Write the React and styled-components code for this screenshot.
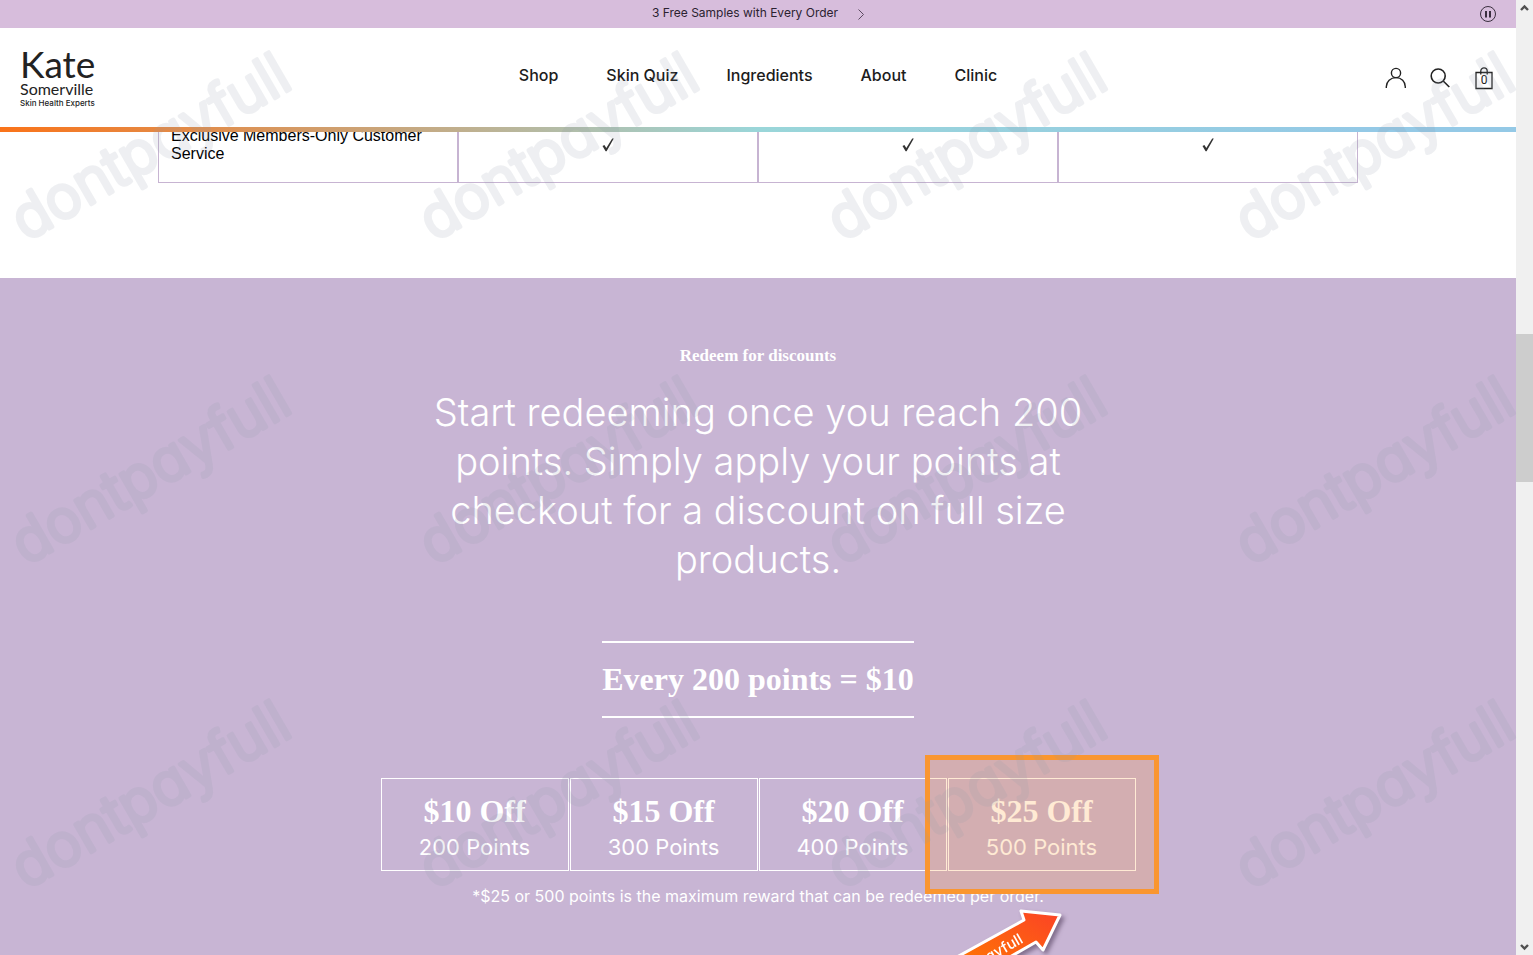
import styled, { createGlobalStyle } from 'styled-components'

const navItems = ['Shop', 'Skin Quiz', 'Ingredients', 'About', 'Clinic']

const rewards = [
  { off: '$10 Off', points: '200 Points' },
  { off: '$15 Off', points: '300 Points' },
  { off: '$20 Off', points: '400 Points' },
  { off: '$25 Off', points: '500 Points', highlighted: true },
]

export default function App() {
  return (
    <>
      <GlobalStyle />
      <Screen>
        <Page>
          <Header />
          <main>
            <BenefitsTable />
            <Redeem />
          </main>
        </Page>
        <ScrollBar />
        <Watermark />
      </Screen>
    </>
  )
}

function Header() {
  return (
    <TopArea>
      <PromoBar>
        <span />
        <PromoLink href="#samples">
          3 Free Samples with Every Order
          <svg width="6" height="11" viewBox="0 0 6 11" fill="none" stroke="#5b4a60" strokeWidth="1">
            <path d="M0.5 0.5 5.5 5.5 0.5 10.5" />
          </svg>
        </PromoLink>
        <IconButton aria-label="Pause announcements">
          <svg width="18" height="18" viewBox="0 0 18 18" fill="none" stroke="#3a2f3f">
            <circle cx="9" cy="9" r="7.5" />
            <path d="M7 6v6.5M11 6v6.5" strokeWidth="2" />
          </svg>
        </IconButton>
      </PromoBar>

      <NavBar>
        <Logo href="#home">
          <LogoName>Kate</LogoName>
          <LogoSurname>Somerville</LogoSurname>
          <LogoTag>Skin Health Experts</LogoTag>
        </Logo>

        <Nav>
          {navItems.map((item) => (
            <NavLink key={item} href="#nav">{item}</NavLink>
          ))}
        </Nav>

        <Tools>
          <IconButton aria-label="Account">
            <svg width="22" height="22" viewBox="0 0 22 22" fill="none" stroke="#222" strokeWidth="1.4">
              <circle cx="12" cy="6" r="4.6" />
              <path d="M2.3 21V19.8C2.3 14.6 6.6 10.6 12 10.6S21.3 14.6 21.3 19.8V21" />
            </svg>
          </IconButton>
          <IconButton aria-label="Search">
            <svg width="22" height="22" viewBox="0 0 22 22" fill="none" stroke="#222" strokeWidth="1.6">
              <circle cx="9.2" cy="9" r="7" />
              <path d="M14.2 14 20.3 20" />
            </svg>
          </IconButton>
          <IconButton aria-label="Bag, 0 items">
            <svg width="20" height="24" viewBox="0 0 20 24" fill="none" stroke="#222" strokeWidth="1.3">
              <path d="M2 6.5H18V22.5H2Z" />
              <path d="M6.8 8.5V5C6.8 0.8 13.2 0.8 13.2 5V8.5" />
            </svg>
            <BagCount>0</BagCount>
          </IconButton>
        </Tools>
      </NavBar>
      <Rainbow />
    </TopArea>
  )
}

function Check() {
  return (
    <svg width="12" height="14" viewBox="0 0 12 14" role="img" aria-label="Included">
      <path d="M0.5 8 2.4 7 4.3 10 10.2 0.6 11.8 0.6 4.6 13.2 3.6 13.2Z" fill="#333" />
    </svg>
  )
}

function BenefitsTable() {
  return (
    <Benefits>
      <tbody>
        <tr>
          <BenefitName scope="row">Exclusive Members-Only Customer Service</BenefitName>
          <BenefitCell><Check /></BenefitCell>
          <BenefitCell><Check /></BenefitCell>
          <BenefitCell><Check /></BenefitCell>
        </tr>
      </tbody>
    </Benefits>
  )
}

function Redeem() {
  return (
    <RedeemSection>
      <Eyebrow>Redeem for discounts</Eyebrow>
      <Lead>
        Start redeeming once you reach 200 points. Simply apply your points at checkout for a
        discount on full size products.
      </Lead>
      <Rate>Every 200 points = $10</Rate>
      <Rewards>
        {rewards.map((reward) => (
          <Reward key={reward.off}>
            <RewardOff>{reward.off}</RewardOff>
            <RewardPoints>{reward.points}</RewardPoints>
            {reward.highlighted && (
              <>
                <Highlight />
                <Pointer />
              </>
            )}
          </Reward>
        ))}
      </Rewards>
      <Note>*$25 or 500 points is the maximum reward that can be redeemed per order.</Note>
    </RedeemSection>
  )
}

function Pointer() {
  return (
    <PointerSvg width="190" height="110" viewBox="0 0 190 110">
      <defs>
        <linearGradient id="pointer-fill" x1="0" y1="1" x2="1" y2="0">
          <stop offset="0.3" stopColor="#ff7a00" />
          <stop offset="1" stopColor="#fb4226" />
        </linearGradient>
      </defs>
      <path
        d="M134 7 173 11 156 46 149 38 50 95 30 75 137 16Z"
        fill="url(#pointer-fill)"
        stroke="#fff"
        strokeWidth="3"
        strokeLinejoin="round"
      />
      <text transform="translate(137 38) rotate(-30)" textAnchor="end">
        dontpayfull
      </text>
    </PointerSvg>
  )
}

function Watermark() {
  return (
    <WatermarkSvg aria-hidden="true">
      <defs>
        <pattern id="mark" width="408" height="324" patternUnits="userSpaceOnUse">
          <text transform="translate(26 242) rotate(-30)">dontpayfull</text>
        </pattern>
      </defs>
      <rect width="100%" height="100%" fill="url(#mark)" />
    </WatermarkSvg>
  )
}

function ScrollBar() {
  return (
    <Track>
      <Arrow viewBox="0 0 17 17"><path d="M5 10 8.5 6.5 12 10" /></Arrow>
      <Gap size={317} />
      <Thumb />
      <Gap size={456} />
      <Arrow viewBox="0 0 17 17"><path d="M5 7 8.5 10.5 12 7" /></Arrow>
    </Track>
  )
}

const GlobalStyle = createGlobalStyle`
  * {
    box-sizing: border-box;
  }

  body {
    margin: 0;
    overflow: hidden;
    background: #fff;
    color: #111;
    font-family: Inter, 'Liberation Sans', sans-serif;
  }

  h2, p, ul {
    margin: 0;
    padding: 0;
  }
`

const Screen = styled.div`
  position: relative;
  display: flex;
  height: 100vh;
  overflow: hidden;
`

const Page = styled.div`
  flex: 1;
  min-width: 0;
  display: flex;
  flex-direction: column;
  overflow: hidden;

  main {
    flex: 1 0 auto;
    display: flex;
    flex-direction: column;
  }
`

const TopArea = styled.header`
  position: relative;
  z-index: 2;
  background: #fff;
`

const PromoBar = styled.div`
  display: grid;
  grid-template-columns: 1fr auto 1fr;
  align-items: center;
  height: 28px;
  padding: 0 19px;
  background: #d7bddc;

  > button {
    justify-self: end;
  }
`

const PromoLink = styled.a`
  display: flex;
  align-items: center;
  gap: 20px;
  padding-bottom: 2px;
  font-size: 12px;
  line-height: 24px;
  color: #2b2230;
  text-decoration: none;

  svg {
    margin-top: 2px;
  }
`

const NavBar = styled.div`
  display: grid;
  grid-template-columns: 1fr auto 1fr;
  align-items: center;
  height: 99px;
  padding: 0 20px;
`

const Logo = styled.a`
  display: flex;
  flex-direction: column;
  justify-self: start;
  font-family: Lato, sans-serif;
  color: #222;
  text-decoration: none;
`

const LogoName = styled.span`
  font-size: 37px;
  line-height: 34px;
`

const LogoSurname = styled.span`
  font-size: 16px;
  line-height: 16px;
`

const LogoTag = styled.span`
  font-family: Inter, sans-serif;
  font-size: 8px;
  font-weight: 500;
  line-height: 12px;
`

const Nav = styled.nav`
  display: flex;
  gap: 48px;
  padding-bottom: 6px;
`

const NavLink = styled.a`
  font-size: 16px;
  font-weight: 500;
  line-height: 20px;
  color: #1c1c1c;
  text-decoration: none;
`

const Tools = styled.div`
  display: flex;
  justify-content: flex-end;
  align-items: center;
  gap: 23px;
  padding-right: 2px;
`

const IconButton = styled.button`
  position: relative;
  display: flex;
  padding: 0;
  border: 0;
  background: none;
  cursor: pointer;
`

const BagCount = styled.span`
  position: absolute;
  inset: 6px 0 0;
  font: 12px/16px Roboto, sans-serif;
  text-align: center;
  color: #222;
`

const Rainbow = styled.div`
  height: 5px;
  background: linear-gradient(90deg, #fa7319, #9ad6d9 50%, #94c9e6 90%);
`

const Benefits = styled.table`
  width: calc(100% - 316px);
  max-width: 1200px;
  margin: -25px auto 95px;
  border-spacing: 0;
  table-layout: fixed;
  font-family: 'Liberation Sans', Arial, sans-serif;
  font-size: 16px;
  line-height: 18px;
  color: #000;
`

const BenefitName = styled.th`
  height: 76px;
  padding: 0 12px;
  border: 1px solid #c7b4d2;
  font-weight: 400;
  text-align: left;
`

const BenefitCell = styled.td`
  border: 1px solid #c7b4d2;

  svg {
    display: block;
    margin: 0 auto;
  }
`

const RedeemSection = styled.section`
  flex: 1;
  display: flex;
  flex-direction: column;
  align-items: center;
  padding: 66px 20px 48px;
  background: #c8b5d4;
  color: #fff;
`

const Eyebrow = styled.h2`
  font-family: 'Liberation Serif', serif;
  font-size: 17px;
  line-height: 24px;
`

const Lead = styled.p`
  max-width: 680px;
  margin-top: 20px;
  font-size: 38px;
  font-weight: 300;
  line-height: 49px;
  text-align: center;
`

const Rate = styled.p`
  margin-top: 57px;
  padding: 18px 0;
  border: solid #fff;
  border-width: 2px 0;
  font-family: 'Liberation Serif', serif;
  font-size: 32px;
  font-weight: 700;
  line-height: 37px;
`

const Rewards = styled.ul`
  display: flex;
  gap: 1px;
  margin-top: 60px;
  list-style: none;
`

const Reward = styled.li`
  position: relative;
  width: 188px;
  padding: 14px 0 6px;
  border: 1px solid #fff;
  text-align: center;
`

const RewardOff = styled.div`
  font-family: 'Liberation Serif', serif;
  font-size: 32px;
  font-weight: 700;
  line-height: 37px;
`

const RewardPoints = styled.div`
  font-size: 22px;
  line-height: 34px;
`

const Highlight = styled.span`
  position: absolute;
  inset: -24px;
  border: 5px solid #fa9630;
  background: rgba(255, 150, 40, 0.2);
`

const PointerSvg = styled.svg`
  position: absolute;
  left: -62px;
  top: 125px;
  filter: drop-shadow(3px 3px 2px rgba(60, 40, 70, 0.5));

  text {
    fill: #fff;
    font-family: Inter, sans-serif;
    font-size: 15px;
    font-weight: 500;
    font-feature-settings: 'cv11';
  }
`

const Note = styled.p`
  margin-top: 13px;
  font-size: 16px;
  line-height: 24px;
`

const WatermarkSvg = styled.svg`
  position: absolute;
  inset: 0;
  z-index: 5;
  width: 100%;
  height: 100%;
  opacity: 0.15;
  pointer-events: none;

  text {
    fill: #919baa;
    stroke: #919baa;
    stroke-width: 4px;
    stroke-linejoin: round;
    font-family: Inter, sans-serif;
    font-size: 59px;
    font-weight: 300;
    font-feature-settings: 'cv11';
  }
`

const Track = styled.div`
  width: 17px;
  display: flex;
  flex-direction: column;
  background: #f0f0f0;
`

const Arrow = styled.svg`
  flex: 0 0 17px;
  fill: none;
  stroke: #505050;
  stroke-width: 2.4;
`

const Gap = styled.div`
  flex: ${({ size }) => size} 0 0;
`

const Thumb = styled.div`
  flex: 148 0 0;
  background: #cdcdcd;
`
